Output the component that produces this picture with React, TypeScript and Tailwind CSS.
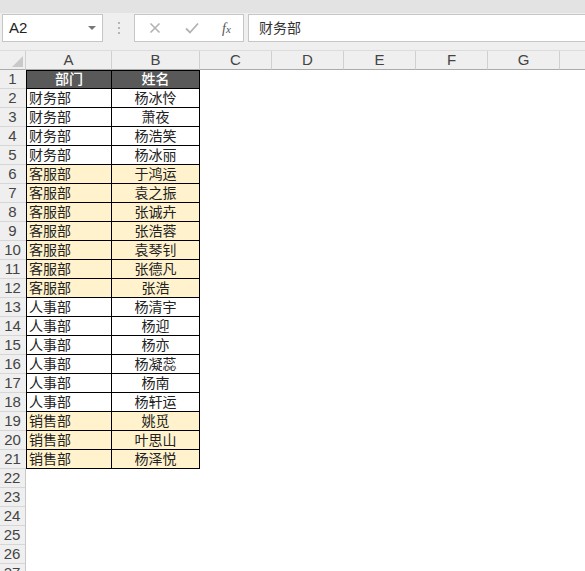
import React from "react";

const rows = [
    { dept: "财务部", name: "杨冰怜", hl: false },
    { dept: "财务部", name: "萧夜", hl: false },
    { dept: "财务部", name: "杨浩笑", hl: false },
    { dept: "财务部", name: "杨冰丽", hl: false },
    { dept: "客服部", name: "于鸿运", hl: true },
    { dept: "客服部", name: "袁之振", hl: true },
    { dept: "客服部", name: "张诚卉", hl: true },
    { dept: "客服部", name: "张浩蓉", hl: true },
    { dept: "客服部", name: "袁琴钊", hl: true },
    { dept: "客服部", name: "张德凡", hl: true },
    { dept: "客服部", name: "张浩", hl: true },
    { dept: "人事部", name: "杨清宇", hl: false },
    { dept: "人事部", name: "杨迎", hl: false },
    { dept: "人事部", name: "杨亦", hl: false },
    { dept: "人事部", name: "杨凝蕊", hl: false },
    { dept: "人事部", name: "杨南", hl: false },
    { dept: "人事部", name: "杨轩运", hl: false },
    { dept: "销售部", name: "姚觅", hl: true },
    { dept: "销售部", name: "叶思山", hl: true },
    { dept: "销售部", name: "杨泽悦", hl: true },
];

const otherCols = ["C", "D", "E", "F", "G"];
const font = { fontFamily: '"Liberation Sans", "Noto Sans CJK SC", sans-serif' };

function RowHeader({ n, edge }: { n: number; edge?: boolean }) {
    return (
        <div
            className={`flex h-[19px] w-[26px] shrink-0 items-center justify-center border-b border-[#d6d6d6] bg-[#efefef] pr-[1px] text-[15px] text-[#444] ${
                edge ? "" : "border-r border-r-[#c8c8c8]"
            }`}
        >
            {n}
        </div>
    );
}

export default function App() {
    return (
        <div className="h-[571px] w-[585px] overflow-hidden bg-white" style={font}>
            {/* ribbon edge */}
            <div className="h-[13px] bg-[#e3e3e3]" />

            {/* formula bar */}
            <div className="flex h-[37px] items-start bg-[#efefef] pt-[1px]">
                <div className="ml-[2px] flex h-[28px] w-[101px] items-center justify-between border border-[#c6c6c6] bg-white pl-[6px] pr-[6px] text-[15px] text-[#222]">
                    <span>A2</span>
                    <span className="h-0 w-0 border-x-[4px] border-t-[4px] border-x-transparent border-t-[#777]" />
                </div>
                <div className="flex h-[28px] w-[31px] flex-col items-center justify-center gap-[3px]">
                    <span className="h-[2px] w-[2px] bg-[#b5b5b5]" />
                    <span className="h-[2px] w-[2px] bg-[#b5b5b5]" />
                    <span className="h-[2px] w-[2px] bg-[#b5b5b5]" />
                </div>
                <div className="flex h-[28px] w-[110px] items-center border border-[#c6c6c6] bg-white">
                    <svg className="ml-[14px]" width="12" height="12" viewBox="0 0 12 12">
                        <path d="M1.5 1.5 L10.5 10.5 M10.5 1.5 L1.5 10.5" stroke="#b3b3b3" strokeWidth="1.6" />
                    </svg>
                    <svg className="ml-[24px]" width="14" height="12" viewBox="0 0 14 12">
                        <path d="M1 6.5 L5 10.5 L13 1.5" stroke="#b3b3b3" strokeWidth="1.8" fill="none" />
                    </svg>
                    <span
                        className="ml-[23px] text-[14px] italic text-[#555]"
                        style={{ fontFamily: '"Liberation Serif", serif' }}
                    >
                        f<span className="text-[11px]">x</span>
                    </span>
                </div>
                <div className="ml-[4px] flex h-[28px] flex-1 items-center border border-r-0 border-[#c6c6c6] bg-white pl-[10px] text-[14px] text-[#333]">
                    财务部
                </div>
            </div>

            {/* column headers */}
            <div className="flex h-[20px] border-t border-[#dcdcdc] bg-[#efefef] text-[15px] text-[#444]">
                <div className="relative w-[26px] shrink-0 border-r border-b border-[#ababab] border-r-[#d0d0d0]">
                    <svg className="absolute bottom-[2px] right-[2px]" width="11" height="11" viewBox="0 0 11 11">
                        <path d="M11 0 L11 11 L0 11 Z" fill="#c9c9c9" />
                    </svg>
                </div>
                <div className="flex w-[86px] shrink-0 items-center justify-center border-r border-b border-[#ababab] border-r-[#d0d0d0]">A</div>
                <div className="flex w-[88px] shrink-0 items-center justify-center border-r border-b border-[#ababab] border-r-[#d0d0d0]">B</div>
                {otherCols.map((c) => (
                    <div key={c} className="flex w-[72px] shrink-0 items-center justify-center border-r border-b border-[#ababab] border-r-[#d0d0d0]">
                        {c}
                    </div>
                ))}
                <div className="flex-1 border-b border-[#ababab]" />
            </div>

            {/* header row */}
            <div className="flex">
                <RowHeader n={1} edge />
                <div className="flex h-[19px] w-[86px] shrink-0 items-center justify-center border border-black bg-[#595959] text-[14px] font-medium text-white">
                    部门
                </div>
                <div className="flex h-[19px] w-[88px] shrink-0 items-center justify-center border-y border-r border-black bg-[#595959] text-[14px] font-medium text-white">
                    姓名
                </div>
            </div>

            {rows.map((r, i) => (
                <div key={i} className="flex">
                    <RowHeader n={i + 2} edge />
                    <div
                        className={`flex h-[19px] w-[86px] shrink-0 items-center border-x border-b border-black pl-[2px] text-[14px] text-[#222] ${
                            r.hl ? "bg-[#fff2cc]" : "bg-white"
                        }`}
                    >
                        {r.dept}
                    </div>
                    <div
                        className={`flex h-[19px] w-[88px] shrink-0 items-center justify-center border-r border-b border-black text-[14px] text-[#222] ${
                            r.hl ? "bg-[#fff2cc]" : "bg-white"
                        }`}
                    >
                        {r.name}
                    </div>
                </div>
            ))}

            {[22, 23, 24, 25, 26, 27].map((n) => (
                <div key={n} className="flex">
                    <RowHeader n={n} />
                </div>
            ))}
        </div>
    );
}
